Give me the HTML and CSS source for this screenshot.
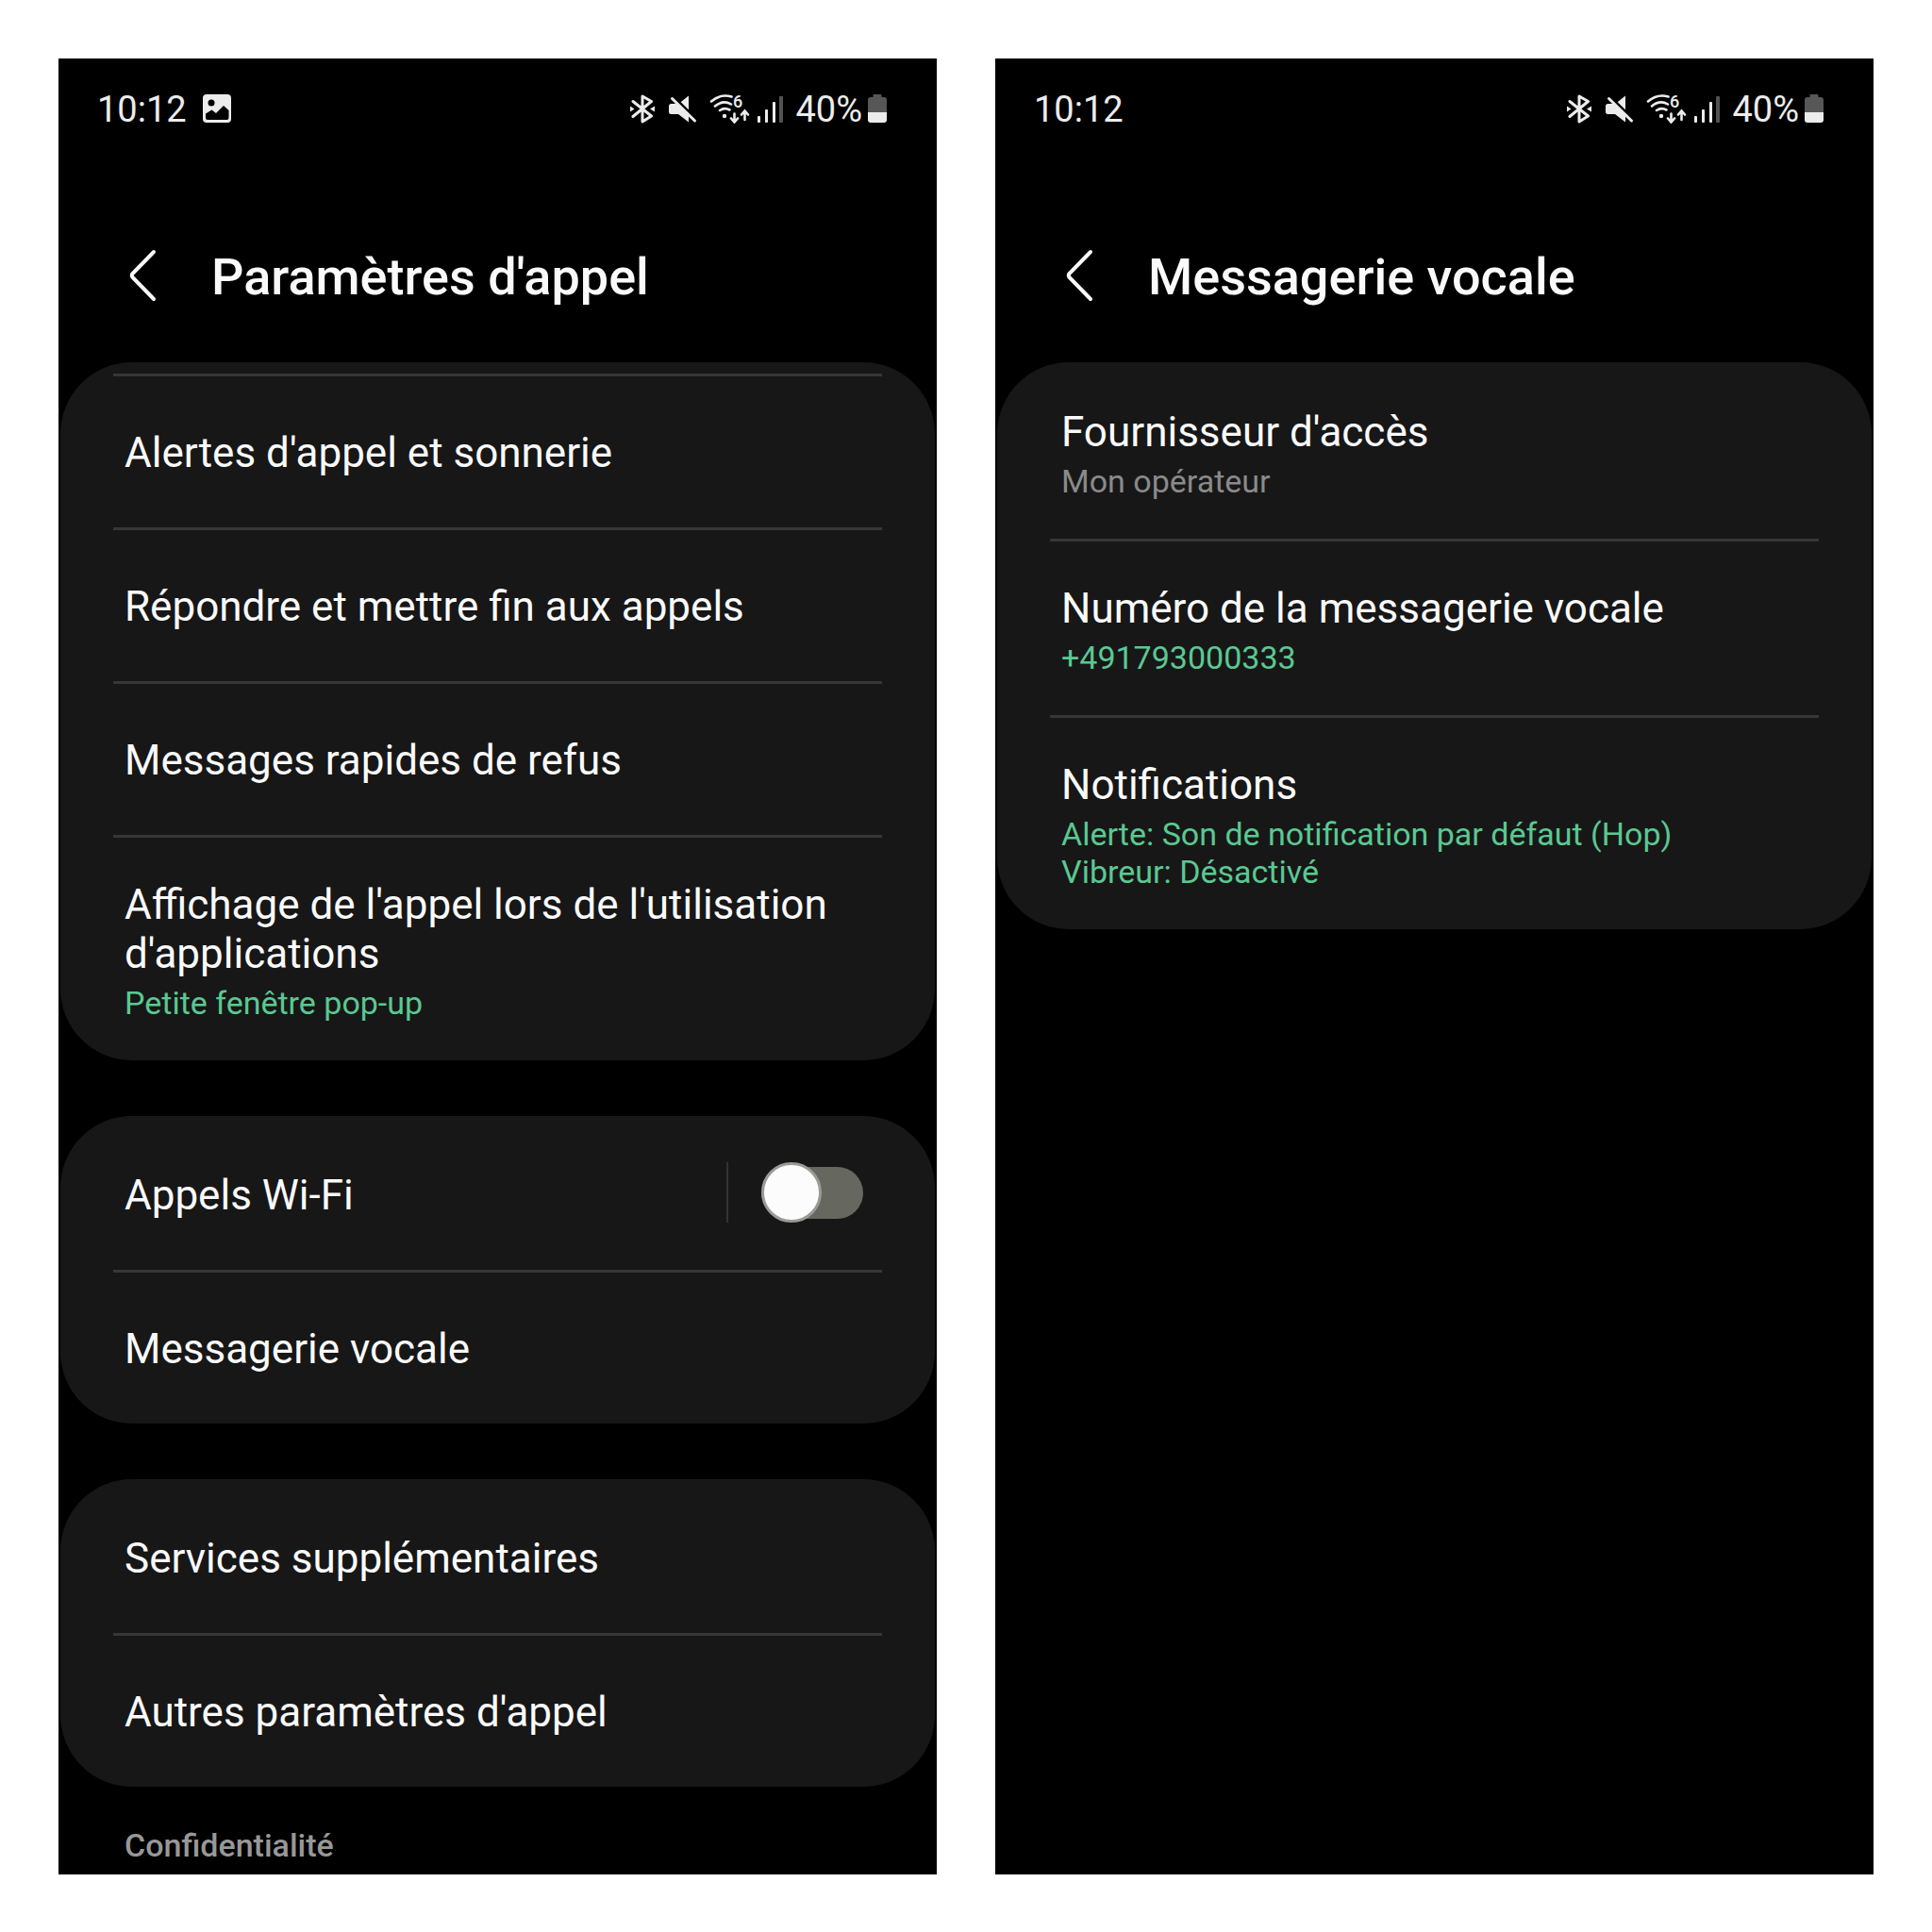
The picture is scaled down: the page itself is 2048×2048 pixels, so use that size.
FILE: index.html
```html
<!DOCTYPE html>
<html lang="fr">
<head>
<meta charset="utf-8">
<meta name="viewport" content="width=device-width, initial-scale=1">
<title>Paramètres d'appel</title>
<link rel="stylesheet" href="styles.css">
</head>
<body>
<svg class="sprite" aria-hidden="true">
  <symbol id="bluetooth" viewBox="0 0 28 32">
    <path d="M4 8.500L23.500 24L14 30V3L23.500 8.500L4 24.500" fill="none" stroke="currentColor" stroke-width="3" stroke-linejoin="round" stroke-linecap="round"/>
    <path d="M1 13.500L5.500 16.500L1 19.500ZM27 13.500L22 16.500L27 19.500Z" fill="currentColor"/>
  </symbol>
  <symbol id="mute" viewBox="0 0 30 32">
    <path d="M21 2.500V18L11 10.500Z" fill="currentColor"/>
    <path d="M3 4L28 28.500" stroke="#000" stroke-width="6"/>
    <path d="M0 13.500Q0 11 2.500 11H8.500L21 23V30.500L10 22H2.500Q0 22 0 19.500Z" fill="currentColor"/>
    <path d="M3.500 5.500L27.500 29" stroke="currentColor" stroke-width="3" stroke-linecap="round"/>
  </symbol>
  <symbol id="wifi" viewBox="0 0 44 32">
    <g fill="none" stroke="currentColor" stroke-width="2.600" stroke-linecap="round">
      <path d="M2 8.500Q12 0 23.500 3.500"/>
      <path d="M6 13.500Q14.500 6.500 23 11.500"/>
      <path d="M11 18Q16 14.500 21.500 17.500"/>
      <path d="M26.500 21.500V30M23 26.500L26.500 30.500L30 26.500"/>
      <path d="M37.500 28V19M34 22.500L37.500 18.500L41 22.500"/>
    </g>
    <circle cx="16" cy="24" r="2.200" fill="currentColor"/>
  </symbol>
  <symbol id="signal" viewBox="0 0 28 32">
    <g fill="currentColor">
      <rect x="0" y="24" width="3" height="7" rx="1"/>
      <rect x="8" y="17" width="3" height="14" rx="1"/>
      <rect x="16" y="9" width="3" height="22" rx="1"/>
      <rect x="23" y="3" width="4" height="28" rx="1" opacity=".35"/>
    </g>
  </symbol>
  <symbol id="battery" viewBox="0 0 20 32">
    <path d="M0 20V7Q0 4 3 4H5.500V2Q5.500 1 7 1H13Q14.500 1 14.500 2V4H17Q20 4 20 7V20Z" fill="#575757"/>
    <path d="M0 20H20V28Q20 31 17 31H3Q0 31 0 28Z" fill="currentColor"/>
  </symbol>
  <symbol id="picture" viewBox="0 0 32 32">
    <rect x="1" y="1" width="30" height="30" rx="4" fill="currentColor"/>
    <circle cx="10" cy="10" r="3.500" fill="#000"/>
    <path d="M4 21.500L10.500 17.500L15 21L23 13L28.500 18V26Q28.500 28 26.500 28H6Q4 28 4 26Z" fill="#000"/>
  </symbol>
  <symbol id="back" viewBox="0 0 32 56">
    <path d="M28 3L5.500 26Q4 28 5.500 30L28 53" fill="none" stroke="currentColor" stroke-width="4" stroke-linecap="round"/>
  </symbol>
</svg>

<main class="screens">
  <section class="phone">
    <div class="status">
      <span>10:12</span>
      <svg class="icon icon--picture"><use href="#picture"/></svg>
      <div class="status__right">
        <svg class="icon icon--bluetooth"><use href="#bluetooth"/></svg>
        <svg class="icon icon--mute"><use href="#mute"/></svg>
        <svg class="icon icon--wifi"><use href="#wifi"/><text x="25" y="15" class="wifi-generation">6</text></svg>
        <svg class="icon icon--signal"><use href="#signal"/></svg>
        <span>40%</span>
        <svg class="icon icon--battery"><use href="#battery"/></svg>
      </div>
    </div>
    <header class="header">
      <button class="back" type="button" aria-label="Retour"><svg><use href="#back"/></svg></button>
      <h1>Paramètres d'appel</h1>
    </header>
    <div class="groups">
      <ul class="card card--scrolled">
        <li class="row"><a href="#">Alertes d'appel et sonnerie</a></li>
        <li class="row"><a href="#">Répondre et mettre fin aux appels</a></li>
        <li class="row"><a href="#">Messages rapides de refus</a></li>
        <li class="row row--detail"><a href="#">Affichage de l'appel lors de l'utilisation d'applications<span class="value">Petite fenêtre pop-up</span></a></li>
      </ul>
      <ul class="card">
        <li class="row row--switch"><label for="wifi-calls">Appels Wi-Fi</label><span class="switch"><input id="wifi-calls" type="checkbox" role="switch"></span></li>
        <li class="row"><a href="#">Messagerie vocale</a></li>
      </ul>
      <ul class="card">
        <li class="row"><a href="#">Services supplémentaires</a></li>
        <li class="row"><a href="#">Autres paramètres d'appel</a></li>
      </ul>
    </div>
    <h2 class="section-title">Confidentialité</h2>
  </section>

  <section class="phone">
    <div class="status">
      <span>10:12</span>
      <div class="status__right">
        <svg class="icon icon--bluetooth"><use href="#bluetooth"/></svg>
        <svg class="icon icon--mute"><use href="#mute"/></svg>
        <svg class="icon icon--wifi"><use href="#wifi"/><text x="25" y="15" class="wifi-generation">6</text></svg>
        <svg class="icon icon--signal"><use href="#signal"/></svg>
        <span>40%</span>
        <svg class="icon icon--battery"><use href="#battery"/></svg>
      </div>
    </div>
    <header class="header">
      <button class="back" type="button" aria-label="Retour"><svg><use href="#back"/></svg></button>
      <h1>Messagerie vocale</h1>
    </header>
    <div class="groups">
      <ul class="card">
        <li class="row row--detail"><a href="#">Fournisseur d'accès<span class="value value--muted">Mon opérateur</span></a></li>
        <li class="row row--detail"><a href="#">Numéro de la messagerie vocale<span class="value">+491793000333</span></a></li>
        <li class="row row--detail"><a href="#">Notifications<span class="value">Alerte: Son de notification par défaut (Hop)<br>Vibreur: Désactivé</span></a></li>
      </ul>
    </div>
  </section>
</main>
</body>
</html>
```
FILE: styles.css
```css
*,
*::before,
*::after {
  box-sizing: border-box;
}

body {
  margin: 0;
  background: #fff;
  color: #fafafa;
  font-family: Roboto, "Liberation Sans", sans-serif;
}

h1,
h2,
ul {
  margin: 0;
  padding: 0;
}

.sprite {
  position: absolute;
  width: 0;
  height: 0;
}

.screens {
  display: grid;
  grid-template-columns: 1fr 1fr;
  gap: 62px;
  padding: 62px;
}

.phone {
  background: #000;
}

/* Status bar */
.status {
  display: flex;
  align-items: center;
  gap: 16px;
  height: 106px;
  padding: 0 53px 0 41px;
  color: #ececec;
  font-size: 38px;
  line-height: 44px;
}

.status span {
  padding-top: 2px;
}

.status__right {
  display: flex;
  align-items: center;
  margin-left: auto;
}

.icon {
  height: 32px;
}

.icon--picture {
  width: 32px;
}

.icon--bluetooth {
  width: 28px;
  margin-right: 14px;
}

.icon--mute {
  width: 30px;
  margin-right: 13px;
}

.icon--wifi {
  width: 44px;
  margin-right: 7px;
}

.icon--signal {
  width: 28px;
  margin-right: 12px;
}

.icon--battery {
  width: 20px;
  margin-left: 6px;
}

.wifi-generation {
  fill: currentColor;
  font-size: 18px;
  font-weight: 500;
}

/* Screen header */
.header {
  display: flex;
  align-items: center;
  gap: 57px;
  height: 216px;
  padding: 32px 73px 0;
}

.header h1 {
  padding-top: 4px;
  font-size: 54px;
  font-weight: 500;
  line-height: 64px;
}

.back {
  width: 32px;
  height: 56px;
  padding: 0;
  border: 0;
  background: none;
  color: inherit;
}

.back svg {
  display: block;
  width: 32px;
  height: 56px;
}

/* Setting groups */
.groups {
  display: grid;
  gap: 59px;
  padding: 0 2px;
}

.card {
  overflow: hidden;
  border-radius: 76px;
  background: #171717;
  list-style: none;
}

.card--scrolled {
  padding-top: 12px;
}

.row {
  margin: 0 56px;
  padding: 55px 12px 53px;
  border-top: 3px solid #373737;
  font-size: 44px;
  line-height: 52px;
}

.card:not(.card--scrolled) .row:first-child {
  border-top-color: transparent;
}

.row a {
  display: block;
  color: inherit;
  text-decoration: none;
}

.row--detail {
  padding: 45px 12px 41px;
}

.value {
  display: block;
  margin-top: 6px;
  color: #5bc892;
  font-size: 34px;
  line-height: 40px;
}

.value--muted {
  color: #8a8a8a;
}

.row--switch {
  display: flex;
  align-items: center;
  justify-content: space-between;
  padding: 46px 20px 50px 12px;
}

.row--switch label {
  padding-top: 6px;
}

.switch {
  display: flex;
  padding-left: 35px;
  border-left: 2px solid #333;
}

.switch input {
  display: flex;
  align-items: center;
  width: 108px;
  height: 64px;
  margin: 0;
  appearance: none;
}

.switch input::before {
  content: "";
  width: 108px;
  height: 55px;
  flex: none;
  border-radius: 28px;
  background: #66675f;
}

.switch input::after {
  content: "";
  width: 64px;
  height: 64px;
  flex: none;
  margin-left: -108px;
  border: 3px solid #9a9a98;
  border-radius: 50%;
  background: #fcfcfc;
}

.switch input:checked::before {
  background: #3e9e6d;
}

.switch input:checked::after {
  margin-left: -64px;
}

.section-title {
  padding: 42px 70px 11px;
  color: #989898;
  font-size: 34px;
  font-weight: 500;
  line-height: 40px;
}
```
